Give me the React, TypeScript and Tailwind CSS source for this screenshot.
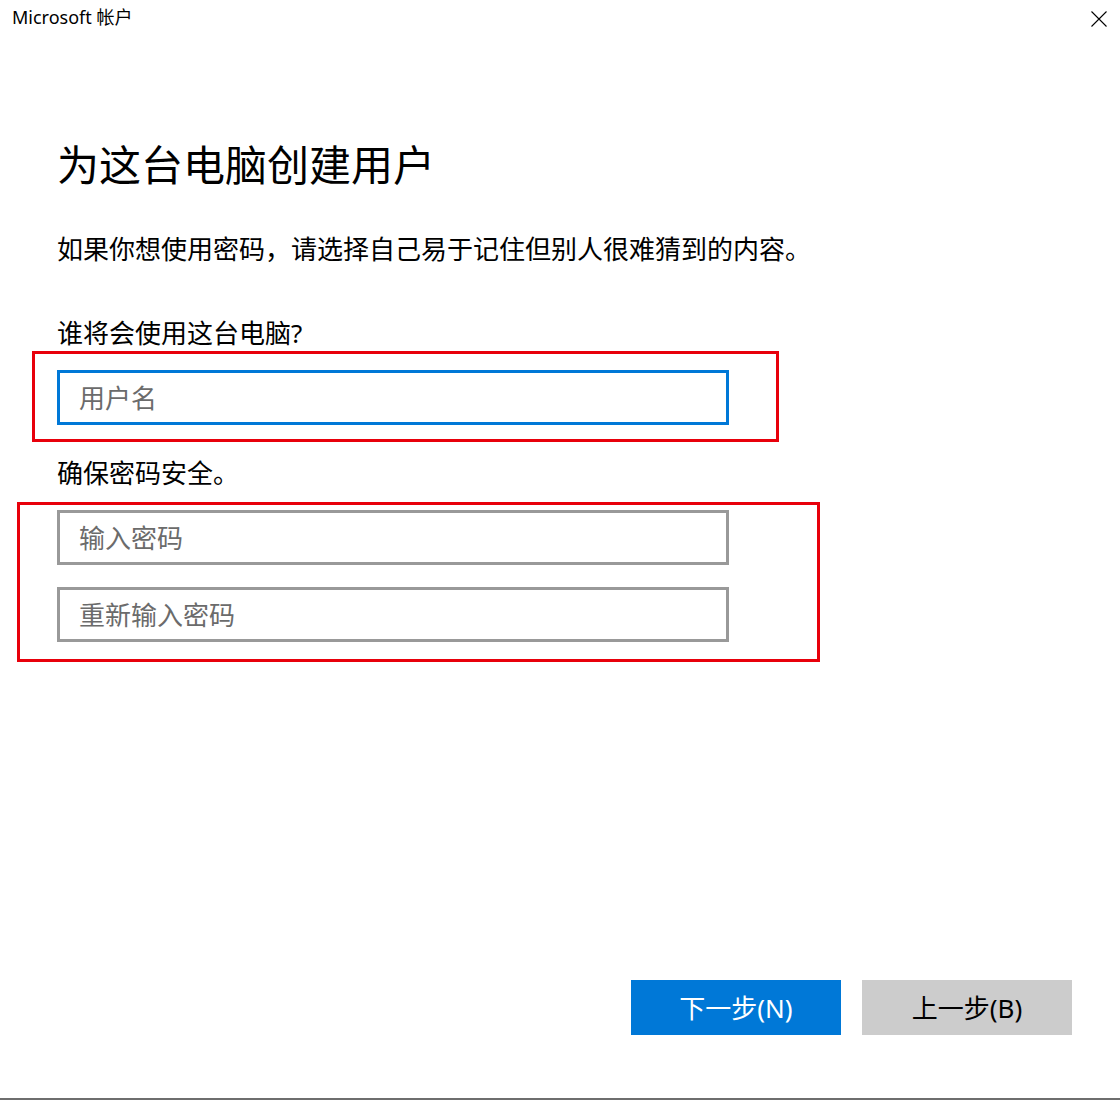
import React from "react";

const font = { fontFamily: '"Noto Sans", "Noto Sans CJK SC", sans-serif' };

function Field({ placeholder, focused }: { placeholder: string; focused?: boolean }) {
  return (
    <input
      type="text"
      placeholder={placeholder}
      className={
        "block w-[672px] h-[55px] border-[3px] bg-white pl-[19px] text-[26px] text-black outline-none placeholder:text-[#6b6b6b] " +
        (focused ? "border-[#0078d7]" : "border-[#999999]")
      }
      style={font}
    />
  );
}

export default function App() {
  return (
    <div
      className="relative flex flex-col w-[1120px] h-[1100px] bg-white border-b-2 border-[#6e6e6e] text-black"
      style={font}
    >
      {/* title bar */}
      <div className="flex items-start justify-between h-[40px] pl-[12px] pr-[13px] pt-[5px]">
        <span className="text-[18px] leading-[24px]">Microsoft 帐户</span>
        <svg width="16" height="16" viewBox="0 0 16 16" className="mt-[6px]">
          <path d="M0.5 0.5L15.5 15.5M15.5 0.5L0.5 15.5" stroke="#000" strokeWidth="1.1" fill="none" />
        </svg>
      </div>

      <div className="flex flex-col pl-[57px]">
        <h1 className="mt-[104px] text-[42px] leading-[42px] font-normal">为这台电脑创建用户</h1>
        <p className="mt-[50px] text-[26px] leading-[27px]">
          如果你想使用密码，请选择自己易于记住但别人很难猜到的内容。
        </p>
        <p className="mt-[57px] text-[26px] leading-[27px]">谁将会使用这台电脑?</p>

        <div className="relative mt-[23px] w-[672px]">
          <Field placeholder="用户名" focused />
          <div className="pointer-events-none absolute -left-[25px] -top-[19px] w-[747px] h-[91px] border-[3px] border-[#e8000b]" />
        </div>

        <p className="mt-[35px] text-[26px] leading-[27px]">确保密码安全。</p>

        <div className="relative mt-[23px] w-[672px]">
          <div className="flex flex-col gap-[22px]">
            <Field placeholder="输入密码" />
            <Field placeholder="重新输入密码" />
          </div>
          <div className="pointer-events-none absolute -left-[40px] -top-[8px] w-[803px] h-[160px] border-[3px] border-[#e8000b]" />
        </div>
      </div>

      <div className="mt-auto flex justify-end gap-[21px] pr-[48px] pb-[63px]">
        <button className="w-[210px] h-[55px] bg-[#0078d7] text-white text-[26px] leading-none">
          下一步(N)
        </button>
        <button className="w-[210px] h-[55px] bg-[#cccccc] text-black text-[26px] leading-none">
          上一步(B)
        </button>
      </div>
    </div>
  );
}
